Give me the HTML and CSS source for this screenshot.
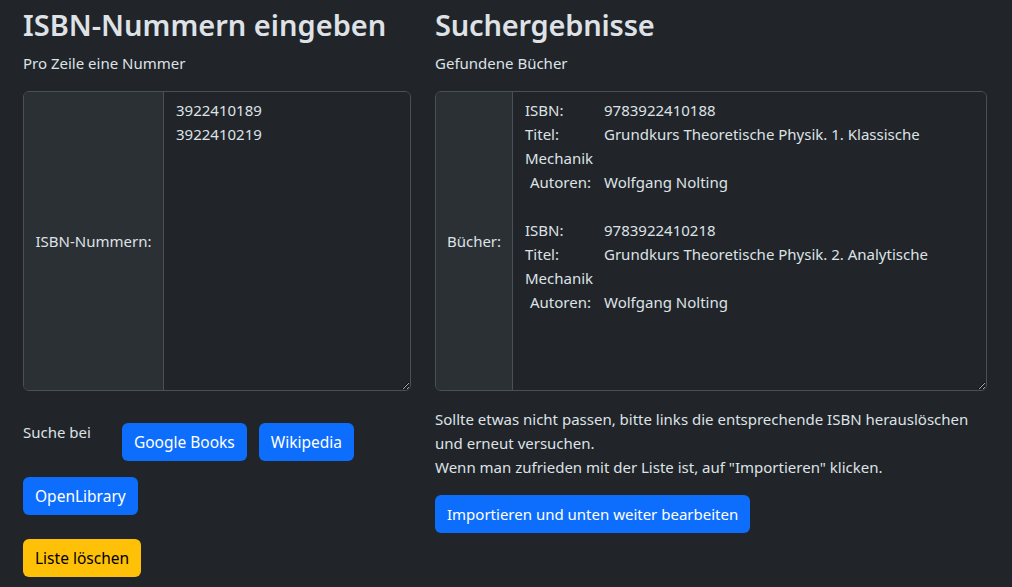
FILE: index.html
```html
<!DOCTYPE html>
<html lang="de">
<head>
<meta charset="utf-8">
<title>ISBN Import</title>
<link rel="stylesheet" href="styles.css">
</head>
<body>
<div class="page">
  <section class="col col-left">
    <h2 class="title">ISBN-Nummern eingeben</h2>
    <p class="sub">Pro Zeile eine Nummer</p>
    <div class="group">
      <span class="group-label label-left">ISBN-Nummern:</span>
      <textarea class="group-field" spellcheck="false">3922410189
3922410219</textarea>
    </div>
    <div class="search">
      <span class="search-label">Suche bei</span>
      <button class="btn btn-primary">Google Books</button>
      <button class="btn btn-primary">Wikipedia</button>
      <button class="btn btn-primary">OpenLibrary</button>
    </div>
    <button class="btn btn-warning clear">Liste löschen</button>
  </section>
  <section class="col col-right">
    <h2 class="title title-right">Suchergebnisse</h2>
    <p class="sub">Gefundene Bücher</p>
    <div class="group">
      <span class="group-label label-right">Bücher:</span>
      <div class="group-field results">
        <div class="book">
          <div><span class="k">ISBN:</span><span class="v">9783922410188</span></div>
          <div><span class="k">Titel:</span><span class="v">Grundkurs Theoretische Physik. 1. Klassische Mechanik</span></div>
          <div><span class="k k-ind">Autoren:</span><span class="v">Wolfgang Nolting</span></div>
        </div>
        <div class="book">
          <div><span class="k">ISBN:</span><span class="v">9783922410218</span></div>
          <div><span class="k">Titel:</span><span class="v">Grundkurs Theoretische Physik. 2. Analytische Mechanik</span></div>
          <div><span class="k k-ind">Autoren:</span><span class="v">Wolfgang Nolting</span></div>
        </div>
      </div>
    </div>
    <p class="hint">Sollte etwas nicht passen, bitte links die entsprechende ISBN herauslöschen und erneut versuchen.<br>Wenn man zufrieden mit der Liste ist, auf "Importieren" klicken.</p>
    <button class="btn btn-primary btn-import">Importieren und unten weiter bearbeiten</button>
  </section>
</div>
</body>
</html>
```

FILE: styles.css
```css
html, body {
  margin: 0;
  padding: 0;
  background: #212529;
}
body {
  color: #dee2e6;
  font-family: "Noto Sans", "Open Sans", sans-serif;
  font-size: 15px;
  line-height: 24px;
}
.page {
  display: flex;
  gap: 24px;
  padding: 7px 25px 0 23px;
}
.col {
  display: flex;
  flex-direction: column;
  align-items: flex-start;
}
.col-left { width: 388px; }
.col-right { width: 552px; }
.title {
  margin: 0;
  font-size: 29px;
  line-height: 36px;
  font-weight: 600;
}
.title-right {
  letter-spacing: -0.2px;
}
.sub {
  margin: 8px 0 0;
}
.group {
  margin-top: 16px;
  display: flex;
  width: 100%;
  height: 300px;
  box-sizing: border-box;
  border: 1px solid #495057;
  border-radius: 6px;
  overflow: hidden;
}
.group-label {
  background: #2b3035;
  border-right: 1px solid #495057;
  display: flex;
  align-items: center;
  justify-content: center;
  padding: 0 12px;
  white-space: nowrap;
}
.label-left { width: 115px; }
.label-right { width: 52px; }
.group-field {
  flex: 1;
  background: #212529;
  color: #dee2e6;
  border: 0;
  margin: 0;
  padding: 6px 12px;
  font: inherit;
  line-height: 24px;
  resize: vertical;
  outline: none;
  overflow: auto;
}
.results {
  padding-right: 10px;
}
.book + .book {
  margin-top: 24px;
}
.k {
  display: inline-block;
  width: 79px;
}
.k-ind {
  padding-left: 5px;
  width: 74px;
}
.search {
  margin-top: 32px;
  display: flex;
  flex-wrap: wrap;
  align-items: flex-start;
  column-gap: 12px;
  row-gap: 16px;
}
.search-label {
  margin-top: -3px;
  margin-right: 19px;
}
.btn {
  font: inherit;
  font-size: 15.5px;
  line-height: 24px;
  padding: 7px 12px;
  border: 0;
  border-radius: 6px;
  cursor: pointer;
}
.btn-primary {
  background: #0d6efd;
  color: #fff;
}
.btn-warning {
  background: #ffc107;
  color: #000;
}
.clear {
  margin-top: 24px;
}
.hint {
  margin: 16px 0 16px;
}
.btn-import {
  font-size: 15px;
}
```
